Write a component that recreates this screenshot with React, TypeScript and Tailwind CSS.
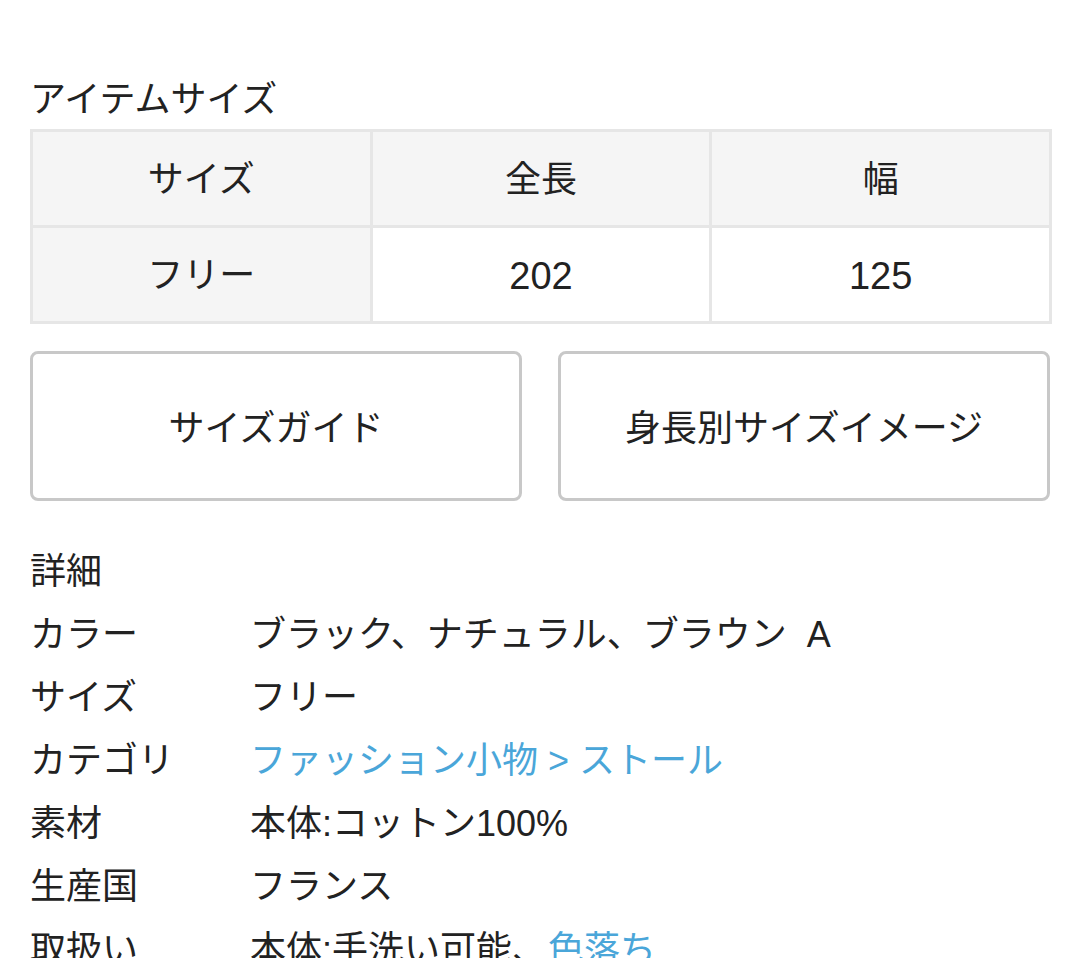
export default function App() {
  const details: { label: string; value: React.ReactNode }[] = [
    { label: 'カラー', value: <>ブラック、ナチュラル、ブラウン&nbsp; A</> },
    { label: 'サイズ', value: 'フリー' },
    {
      label: 'カテゴリ',
      value: <span className="text-[#4aa6d9]">ファッション小物 &gt; ストール</span>,
    },
    { label: '素材', value: '本体:コットン100%' },
    { label: '生産国', value: 'フランス' },
    {
      label: '取扱い',
      value: (
        <>
          本体:手洗い可能、<span className="text-[#4aa6d9]">色落ち</span>
        </>
      ),
    },
  ];

  return (
    <div
      className="w-[1080px] h-[958px] overflow-hidden bg-white text-[#222] text-[36px]"
      style={{ fontFamily: '"Liberation Sans", "Noto Sans CJK JP", sans-serif' }}
    >
      <div className="px-[30px] pt-[76px]">
        {/* Item size */}
        <h2 className="leading-[48px] h-[53px] font-normal text-[36px]">アイテムサイズ</h2>
        <table className="w-[1022px] border-collapse table-fixed text-center">
          <tbody>
            <tr className="bg-[#f5f5f5]">
              <td className="h-[96px] pt-[3px] border-[3px] border-[#e6e6e6]">サイズ</td>
              <td className="h-[96px] pt-[3px] border-[3px] border-[#e6e6e6]">全長</td>
              <td className="h-[96px] pt-[3px] border-[3px] border-[#e6e6e6]">幅</td>
            </tr>
            <tr>
              <td className="h-[96px] pt-[3px] border-[3px] border-[#e6e6e6] bg-[#f5f5f5]">フリー</td>
              <td className="h-[96px] pt-[3px] border-[3px] border-[#e6e6e6] text-[38px]">202</td>
              <td className="h-[96px] pt-[3px] border-[3px] border-[#e6e6e6] text-[38px]">125</td>
            </tr>
          </tbody>
        </table>

        {/* Buttons */}
        <div className="mt-[27px] grid grid-cols-2 gap-[36px]">
          <button className="h-[150px] pt-[5px] rounded-[8px] border-[3px] border-[#c8c8c8] bg-white text-[36px]">
            サイズガイド
          </button>
          <button className="h-[150px] pt-[5px] rounded-[8px] border-[3px] border-[#c8c8c8] bg-white text-[36px]">
            身長別サイズイメージ
          </button>
        </div>

        {/* Details */}
        <div className="mt-[39px] leading-[63px]">
          <div>詳細</div>
          {details.map((d) => (
            <div key={d.label} className="flex">
              <div className="w-[220px] shrink-0">{d.label}</div>
              <div className="whitespace-nowrap">{d.value}</div>
            </div>
          ))}
        </div>
      </div>
    </div>
  );
}
